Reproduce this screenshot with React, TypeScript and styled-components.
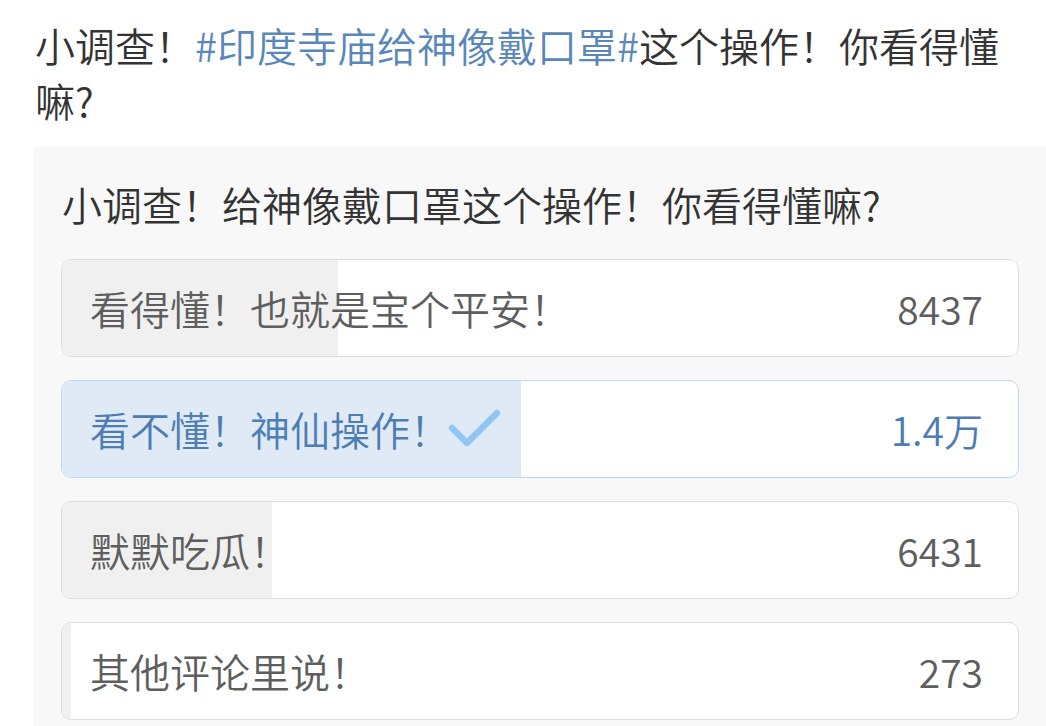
import React from 'react'
import styled, { createGlobalStyle } from 'styled-components'

const GlobalStyle = createGlobalStyle`
  html, body {
    margin: 0;
    padding: 0;
    background: #ffffff;
  }
  body {
    font-family: "Noto Sans CJK SC", "Noto Sans", sans-serif;
    font-weight: 350;
  }
`

interface Option {
  label: string
  count: string
  ratio: number
  chosen?: boolean
}

const options: Option[] = [
  { label: '看得懂！也就是宝个平安！', count: '8437', ratio: 0.289 },
  { label: '看不懂！神仙操作！', count: '1.4万', ratio: 0.48, chosen: true },
  { label: '默默吃瓜！', count: '6431', ratio: 0.22 },
  { label: '其他评论里说！', count: '273', ratio: 0.0095 },
]

const CheckMark: React.FunctionComponent = () => (
  <CheckIcon width="56" height="44" viewBox="0 0 56 44">
    <polyline
      points="6,21 21,36 51,6"
      fill="none"
      stroke="#8fc6f3"
      strokeWidth="6.5"
      strokeLinecap="round"
      strokeLinejoin="round"
    />
  </CheckIcon>
)

const App: React.FunctionComponent = () => {
  return (
    <>
      <GlobalStyle />
      <Page>
        <PostText>
          <Plain>小调查！</Plain>
          <Topic>#印度寺庙给神像戴口罩#</Topic>
          <Plain>这个操作！你看得懂嘛?</Plain>
        </PostText>
        <Card>
          <Question>小调查！给神像戴口罩这个操作！你看得懂嘛?</Question>
          <OptionList>
            {options.map((option) => (
              <OptionRow key={option.label} chosen={option.chosen}>
                <Fill chosen={option.chosen} style={{ width: `${option.ratio * 100}%` }} />
                <Label chosen={option.chosen}>
                  {option.label}
                  {option.chosen && <CheckMark />}
                </Label>
                <Count chosen={option.chosen}>{option.count}</Count>
              </OptionRow>
            ))}
          </OptionList>
        </Card>
      </Page>
    </>
  )
}

export default App

const Page = styled.div`
  display: flex;
  flex-direction: column;
  padding: 18px 0 0 33px;
  height: 726px;
  box-sizing: border-box;
  overflow: hidden;
`

const PostText = styled.p`
  margin: 0 30px 0 2px;
  font-size: 40px;
  line-height: 55px;
  color: #333333;
`

const Plain = styled.span`
  color: #333333;
`

const Topic = styled.span`
  color: #5a87ba;
`

const Card = styled.div`
  margin-top: 19px;
  background: #f8f8f8;
  padding: 31px 27px 0 28px;
  flex: 1;
`

const Question = styled.div`
  font-size: 40px;
  line-height: 52px;
  color: #333333;
  padding-left: 1px;
`

const OptionList = styled.div`
  display: flex;
  flex-direction: column;
  gap: 23px;
  margin-top: 29px;
`

const OptionRow = styled.div<{ chosen?: boolean }>`
  position: relative;
  display: flex;
  align-items: center;
  justify-content: space-between;
  height: 98px;
  box-sizing: border-box;
  padding: 0 35px 0 28px;
  background: #ffffff;
  border: 1px solid ${(p) => (p.chosen ? '#b9daf6' : '#dddddd')};
  border-radius: 10px;
  overflow: hidden;
`

const Fill = styled.div<{ chosen?: boolean }>`
  position: absolute;
  left: 0;
  top: 0;
  bottom: 0;
  background: ${(p) => (p.chosen ? '#dfeaf6' : '#f0f0f0')};
`

const Label = styled.span<{ chosen?: boolean }>`
  position: relative;
  display: flex;
  align-items: center;
  font-size: 40px;
  color: ${(p) => (p.chosen ? '#4d7db3' : '#5e5e5e')};
`

const Count = styled.span<{ chosen?: boolean }>`
  position: relative;
  font-size: 39px;
  color: ${(p) => (p.chosen ? '#4d7db3' : '#5e5e5e')};
`

const CheckIcon = styled.svg`
  margin-left: -4px;
  flex-shrink: 0;
`
